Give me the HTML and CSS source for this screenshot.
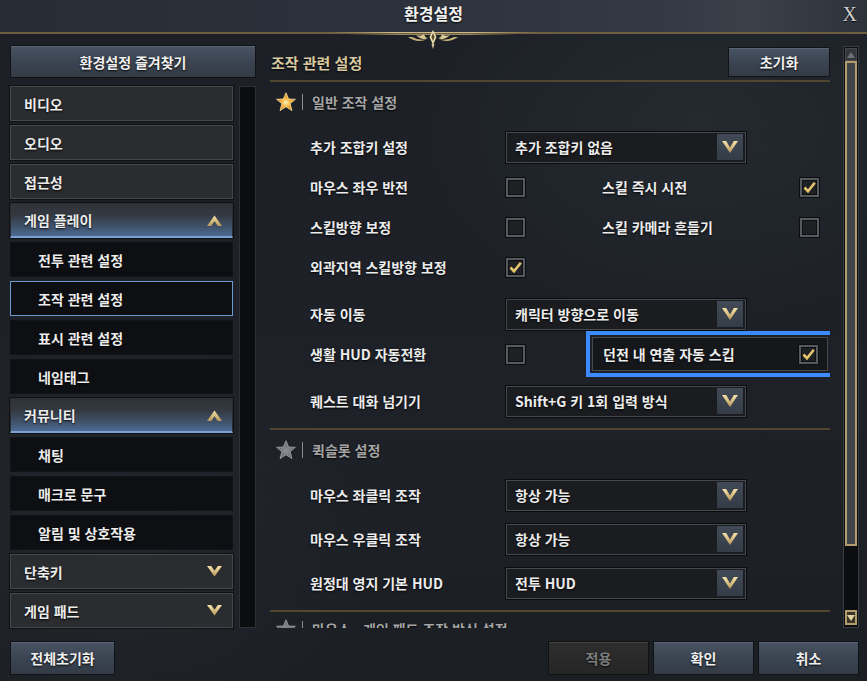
FILE: index.html
```html
<!DOCTYPE html>
<html lang="ko">
<head>
<meta charset="utf-8">
<title>환경설정</title>
<link rel="stylesheet" href="styles.css">
</head>
<body>
<div class="window">
  <header class="titlebar">
    <h1 class="title">환경설정</h1>
    <span class="close">X</span>
    <svg class="ornament" width="210" height="20" viewBox="0 0 210 20">
      <defs>
        <linearGradient id="ornLine" x1="0" x2="1" y1="0" y2="0">
          <stop offset="0" stop-color="#c9b27a" stop-opacity="0"/>
          <stop offset="0.3" stop-color="#d8c38e" stop-opacity="0.9"/>
          <stop offset="0.7" stop-color="#d8c38e" stop-opacity="0.9"/>
          <stop offset="1" stop-color="#c9b27a" stop-opacity="0"/>
        </linearGradient>
      </defs>
      <rect x="0" y="3" width="210" height="1" fill="url(#ornLine)"/>
      <rect x="20" y="5" width="170" height="1" fill="url(#ornLine)" opacity="0.7"/>
      <path d="M105 1 L108.5 8 L105 16 L101.5 8 Z" fill="#eadbae"/>
      <path d="M105 4 L106.6 8 L105 12 L103.4 8 Z" fill="#5b4b2c"/>
      <path d="M100 9 Q94 12 88 6 Q93 8 96 5 Q97 9 100 9 Z" fill="#dcc893"/>
      <path d="M110 9 Q116 12 122 6 Q117 8 114 5 Q113 9 110 9 Z" fill="#dcc893"/>
      <path d="M99 10 Q90 15 80 8 L84 8 Q91 12 99 10 Z" fill="#c9b27a"/>
      <path d="M111 10 Q120 15 130 8 L126 8 Q119 12 111 10 Z" fill="#c9b27a"/>
      <path d="M103.5 15 L105 20 L106.5 15 Z" fill="#dcc893"/>
    </svg>
  </header>

  <div class="main">
    <aside class="sidebar">
      <button class="btn fav">환경설정 즐겨찾기</button>
      <div class="menu-wrap">
        <ul class="menu">
          <li class="item">비디오</li>
          <li class="item">오디오</li>
          <li class="item">접근성</li>
          <li class="item group">게임 플레이
            <svg class="chev" width="15" height="11" viewBox="0 0 15 11"><polygon points="0,11 7.5,0.5 15,11 10.8,11 7.5,6.2 4.2,11" fill="url(#gold)"/></svg>
          </li>
          <li class="item sub">전투 관련 설정</li>
          <li class="item sub selected">조작 관련 설정</li>
          <li class="item sub">표시 관련 설정</li>
          <li class="item sub">네임태그</li>
          <li class="item group">커뮤니티
            <svg class="chev" width="15" height="11" viewBox="0 0 15 11"><polygon points="0,11 7.5,0.5 15,11 10.8,11 7.5,6.2 4.2,11" fill="url(#gold)"/></svg>
          </li>
          <li class="item sub">채팅</li>
          <li class="item sub">매크로 문구</li>
          <li class="item sub">알림 및 상호작용</li>
          <li class="item">단축키
            <svg class="chev" width="15" height="11" viewBox="0 0 15 11"><polygon points="0,0 7.5,10.5 15,0 10.8,0 7.5,4.8 4.2,0" fill="url(#gold)"/></svg>
          </li>
          <li class="item">게임 패드
            <svg class="chev" width="15" height="11" viewBox="0 0 15 11"><polygon points="0,0 7.5,10.5 15,0 10.8,0 7.5,4.8 4.2,0" fill="url(#gold)"/></svg>
          </li>
        </ul>
        <div class="side-track"></div>
      </div>
    </aside>

    <section class="panel">
      <div class="panel-body">
        <div class="panel-head">
          <h2 class="panel-title">조작 관련 설정</h2>
          <button class="btn reset">초기화</button>
        </div>
        <div class="scroll">
          <div class="section">
            <div class="sec-head">
              <svg class="star" width="20" height="20" viewBox="0 0 20 20"><polygon points="10,0.8 12.6,7 19.4,7.3 14.1,11.6 15.9,18.6 10,14.7 4.1,18.6 5.9,11.6 0.6,7.3 7.4,7" fill="url(#starGold)" stroke="#ffe7a0" stroke-width="0.8"/></svg>
              <span class="sep"></span>
              <span class="sec-title">일반 조작 설정</span>
            </div>
            <div class="rows">
              <div class="row">
                <span class="label">추가 조합키 설정</span>
                <div class="dropdown"><span>추가 조합키 없음</span><span class="dd-btn"><svg width="16" height="12" viewBox="0 0 16 12"><polygon points="0,0 4.2,0 8,6.5 11.8,0 16,0 8,12" fill="url(#gold)"/></svg></span></div>
              </div>
              <div class="row cbrow">
                <span class="label">마우스 좌우 반전</span>
                <span class="cb"></span>
                <div class="col2"><span class="label2">스킬 즉시 시전</span><span class="cb on"><svg width="15" height="15" viewBox="0 0 15 15"><path d="M2.5 7.5 L6 11.2 L12.8 2.8" fill="none" stroke="#e7c56e" stroke-width="2.6"/></svg></span></div>
              </div>
              <div class="row cbrow">
                <span class="label">스킬방향 보정</span>
                <span class="cb"></span>
                <div class="col2"><span class="label2">스킬 카메라 흔들기</span><span class="cb"></span></div>
              </div>
              <div class="row cbrow">
                <span class="label">외곽지역 스킬방향 보정</span>
                <span class="cb on"><svg width="15" height="15" viewBox="0 0 15 15"><path d="M2.5 7.5 L6 11.2 L12.8 2.8" fill="none" stroke="#e7c56e" stroke-width="2.6"/></svg></span>
              </div>
              <div class="row wide">
                <span class="label">자동 이동</span>
                <div class="dropdown"><span>캐릭터 방향으로 이동</span><span class="dd-btn"><svg width="16" height="12" viewBox="0 0 16 12"><polygon points="0,0 4.2,0 8,6.5 11.8,0 16,0 8,12" fill="url(#gold)"/></svg></span></div>
              </div>
              <div class="row cbrow">
                <span class="label">생활 HUD 자동전환</span>
                <span class="cb"></span>
                <div class="col2 boxed"><span class="label2">던전 내 연출 자동 스킵</span><span class="cb on"><svg width="15" height="15" viewBox="0 0 15 15"><path d="M2.5 7.5 L6 11.2 L12.8 2.8" fill="none" stroke="#e7c56e" stroke-width="2.6"/></svg></span></div>
              </div>
              <div class="row wide">
                <span class="label">퀘스트 대화 넘기기</span>
                <div class="dropdown"><span>Shift+G 키 1회 입력 방식</span><span class="dd-btn"><svg width="16" height="12" viewBox="0 0 16 12"><polygon points="0,0 4.2,0 8,6.5 11.8,0 16,0 8,12" fill="url(#gold)"/></svg></span></div>
              </div>
            </div>
          </div>

          <div class="section sec2">
            <div class="sec-head">
              <svg class="star" width="20" height="20" viewBox="0 0 20 20"><polygon points="10,0.8 12.6,7 19.4,7.3 14.1,11.6 15.9,18.6 10,14.7 4.1,18.6 5.9,11.6 0.6,7.3 7.4,7" fill="url(#starGrey)" stroke="#a6a9ae" stroke-width="0.8"/></svg>
              <span class="sep"></span>
              <span class="sec-title">퀵슬롯 설정</span>
            </div>
            <div class="rows">
              <div class="row">
                <span class="label">마우스 좌클릭 조작</span>
                <div class="dropdown"><span>항상 가능</span><span class="dd-btn"><svg width="16" height="12" viewBox="0 0 16 12"><polygon points="0,0 4.2,0 8,6.5 11.8,0 16,0 8,12" fill="url(#gold)"/></svg></span></div>
              </div>
              <div class="row">
                <span class="label">마우스 우클릭 조작</span>
                <div class="dropdown"><span>항상 가능</span><span class="dd-btn"><svg width="16" height="12" viewBox="0 0 16 12"><polygon points="0,0 4.2,0 8,6.5 11.8,0 16,0 8,12" fill="url(#gold)"/></svg></span></div>
              </div>
              <div class="row">
                <span class="label">원정대 영지 기본 HUD</span>
                <div class="dropdown"><span>전투 HUD</span><span class="dd-btn"><svg width="16" height="12" viewBox="0 0 16 12"><polygon points="0,0 4.2,0 8,6.5 11.8,0 16,0 8,12" fill="url(#gold)"/></svg></span></div>
              </div>
            </div>
          </div>

          <div class="section sec3">
            <div class="sec-head">
              <svg class="star" width="20" height="20" viewBox="0 0 20 20"><polygon points="10,0.8 12.6,7 19.4,7.3 14.1,11.6 15.9,18.6 10,14.7 4.1,18.6 5.9,11.6 0.6,7.3 7.4,7" fill="url(#starGrey)" stroke="#a6a9ae" stroke-width="0.8"/></svg>
              <span class="sep"></span>
              <span class="sec-title">마우스 · 게임 패드 조작 방식 설정</span>
            </div>
          </div>
        </div>
      </div>
      <div class="vscroll">
        <span class="vs-up"><svg width="8" height="6" viewBox="0 0 8 6"><polygon points="0,6 4,0 8,6" fill="#6c6f74"/></svg></span>
        <span class="vs-thumb"></span>
        <span class="vs-space"></span>
        <span class="vs-down"><svg width="8" height="6" viewBox="0 0 8 6"><polygon points="0,0 8,0 4,6" fill="#e2d2a6"/></svg></span>
      </div>
    </section>
  </div>

  <footer class="footer">
    <button class="btn wide-btn">전체초기화</button>
    <div class="actions">
      <button class="btn act disabled">적용</button>
      <button class="btn act">확인</button>
      <button class="btn act">취소</button>
    </div>
  </footer>

  <svg class="defs" width="0" height="0">
    <defs>
      <linearGradient id="gold" x1="0" x2="0" y1="0" y2="1">
        <stop offset="0" stop-color="#f6e3a8"/>
        <stop offset="1" stop-color="#b9985a"/>
      </linearGradient>
      <radialGradient id="starGold" cx="0.5" cy="0.55" r="0.55">
        <stop offset="0" stop-color="#fff3b8"/>
        <stop offset="0.45" stop-color="#f5b13c"/>
        <stop offset="1" stop-color="#c8741a"/>
      </radialGradient>
      <radialGradient id="starGrey" cx="0.5" cy="0.55" r="0.55">
        <stop offset="0" stop-color="#8e9196"/>
        <stop offset="1" stop-color="#5d6065"/>
      </radialGradient>
    </defs>
  </svg>
</div>
</body>
</html>
```

FILE: styles.css
```css
* {
  box-sizing: border-box;
  margin: 0;
  padding: 0;
}

html, body {
  width: 867px;
  height: 681px;
  overflow: hidden;
}

body {
  font-family: "Noto Sans CJK KR", "Noto Sans", sans-serif;
  font-size: 14px;
  color: #e8e8e8;
  background: #1d2127;
}

.window {
  position: relative;
  width: 867px;
  height: 681px;
  display: flex;
  flex-direction: column;
  background:
    radial-gradient(ellipse 300px 200px at 700px 120px, rgba(60, 66, 76, 0.25), transparent),
    radial-gradient(ellipse 260px 220px at 120px 560px, rgba(50, 56, 64, 0.25), transparent),
    linear-gradient(180deg, #1c2026 0%, #1e2228 60%, #1b1e23 100%);
}

.defs {
  position: absolute;
  width: 0;
  height: 0;
}

/* ---------- title bar ---------- */
.titlebar {
  position: relative;
  flex: none;
  height: 34px;
  display: flex;
  align-items: center;
  justify-content: center;
  padding-bottom: 6px;
  background: linear-gradient(90deg, #272c35 0%, #2c313b 45%, #343944 78%, #3b4049 86%, #2d323b 100%);
  border-bottom: 2px solid #6f5f3e;
}

.title {
  font-size: 16px;
  font-weight: 700;
  color: #f2f2f2;
  text-shadow: 0 1px 2px rgba(0, 0, 0, 0.9);
}

.close {
  position: absolute;
  right: 10px;
  top: 3px;
  font-family: "Liberation Serif", "DejaVu Serif", serif;
  font-size: 20px;
  color: #cfcfcf;
  text-shadow: 0 1px 1px rgba(0, 0, 0, 0.8);
}

.ornament {
  position: absolute;
  left: 328px;
  top: 29px;
}

/* ---------- main ---------- */
.main {
  flex: none;
  height: 594px;
  display: flex;
  padding: 11px 8px 0 10px;
}

.btn {
  font-family: "Noto Sans CJK KR", "Noto Sans", sans-serif;
  font-size: 14px;
  font-weight: 700;
  color: #f0f0f0;
  background: linear-gradient(180deg, #485363 0%, #3a4350 55%, #333b46 100%);
  border: 1px solid #111316;
  box-shadow: inset 0 1px 0 rgba(255, 255, 255, 0.1);
  text-shadow: 0 1px 2px rgba(0, 0, 0, 0.9);
}

/* ---------- sidebar ---------- */
.sidebar {
  width: 246px;
  flex: none;
  display: flex;
  flex-direction: column;
}

.fav {
  height: 33px;
  width: 246px;
  margin-bottom: 8px;
}

.menu-wrap {
  display: flex;
  height: 542px;
}

.menu {
  list-style: none;
  width: 223px;
  display: flex;
  flex-direction: column;
  gap: 4px;
}

.item {
  height: 35px;
  display: flex;
  align-items: center;
  justify-content: space-between;
  padding: 0 10px 0 13px;
  font-weight: 700;
  font-size: 14px;
  color: #ececec;
  background: #2b2c2f;
  border: 1px solid #46484c;
  box-shadow: 0 0 0 1px #101113;
  text-shadow: 0 1px 2px rgba(0, 0, 0, 0.9);
}

.item.group {
  background: linear-gradient(180deg, #303338 0%, #343941 35%, #41556f 75%, #4d6b93 100%);
  border: 1px solid #2a2d31;
  border-bottom: 2px solid #7aa1d2;
}

.item.sub {
  padding-left: 27px;
  background: #0d0f12;
  border: 1px solid #121418;
  box-shadow: none;
}

.item.sub.selected {
  border: 1px solid #6a9bcd;
}

.chev {
  flex: none;
}

.side-track {
  width: 17px;
  margin-left: 6px;
  height: 542px;
  background: #0b0d0f;
  border: 1px solid #2d3034;
}

/* ---------- panel ---------- */
.panel {
  display: flex;
  margin-left: 14px;
  padding-top: 1px;
}

.panel-body {
  width: 560px;
  padding-top: 1px;
  display: flex;
  flex-direction: column;
}

.panel-head {
  height: 30px;
  display: flex;
  align-items: center;
  justify-content: space-between;
  margin-bottom: 3px;
}

.panel-title {
  font-size: 15px;
  font-weight: 700;
  color: #d9c9a0;
  padding-left: 1px;
  text-shadow: 0 1px 2px rgba(0, 0, 0, 0.9);
}

.reset {
  width: 102px;
  height: 30px;
}

.scroll {
  height: 548px;
  overflow: hidden;
}

.section {
  border-top: 2px solid #51472f;
  padding: 10px 0;
}

.sec3 {
  padding-top: 7px;
}

.sec-head {
  height: 20px;
  display: flex;
  align-items: center;
  padding-left: 6px;
}

.star {
  flex: none;
}

.sep {
  width: 1px;
  height: 16px;
  background: #8c8c8c;
  margin: 0 9px 0 6px;
}

.sec-title {
  font-size: 14px;
  font-weight: 700;
  color: #a5a5a5;
  text-shadow: 0 1px 2px rgba(0, 0, 0, 0.9);
}

.rows {
  margin-top: 18px;
  padding-left: 40px;
  display: flex;
  flex-direction: column;
  gap: 6px;
}

.sec2 .rows {
  gap: 10px;
}

.row {
  height: 34px;
  display: flex;
  align-items: center;
}

.row.wide {
  margin-top: 7px;
}

.label {
  width: 196px;
  flex: none;
  font-weight: 700;
  color: #ececec;
  text-shadow: 0 1px 2px rgba(0, 0, 0, 0.9);
}

.label2 {
  font-weight: 700;
  color: #ececec;
  text-shadow: 0 1px 2px rgba(0, 0, 0, 0.9);
}

.dropdown {
  width: 240px;
  height: 31px;
  display: flex;
  align-items: center;
  padding-left: 8px;
  background: #1a1c1f;
  border: 1px solid #46494e;
  box-shadow: 0 0 0 1px #0a0b0d;
  font-weight: 700;
  color: #ececec;
  text-shadow: 0 1px 2px rgba(0, 0, 0, 0.9);
}

.dd-btn {
  margin-left: auto;
  margin-right: 2px;
  width: 26px;
  height: 26px;
  display: flex;
  align-items: center;
  justify-content: center;
  background: linear-gradient(180deg, #414a56 0%, #343c47 100%);
}

.cb {
  flex: none;
  width: 19px;
  height: 19px;
  display: flex;
  align-items: center;
  justify-content: center;
  background: #1e2024;
  border: 2px solid #56595e;
  box-shadow: 0 0 0 1px #0c0d0f, inset 0 0 0 1px #0f1012;
}

.col2 {
  margin-left: 67px;
  width: 236px;
  height: 34px;
  display: flex;
  align-items: center;
  justify-content: space-between;
  padding: 0 9px 0 10px;
}

.col2.boxed {
  background: #15171a;
  border: 1px solid #45484d;
  outline: 4px solid #3b8bfd;
  outline-offset: 2px;
}

/* ---------- vertical scrollbar ---------- */
.vscroll {
  width: 16px;
  height: 582px;
  margin-left: 13px;
  display: flex;
  flex-direction: column;
  align-items: center;
  padding: 1px;
  background: #0b0d10;
  border: 1px solid #383b40;
}

.vs-up {
  width: 12px;
  height: 13px;
  display: flex;
  align-items: center;
  justify-content: center;
  background: #34373c;
  border: 1px solid #45484d;
}

.vs-thumb {
  width: 12px;
  height: 485px;
  background: #404349;
  border: 2px solid #b49d6d;
}

.vs-space {
  flex: 1;
}

.vs-down {
  width: 12px;
  height: 15px;
  display: flex;
  align-items: center;
  justify-content: center;
  background: #3a3427;
  border: 2px solid #b49d6d;
  margin-bottom: 1px;
}

/* ---------- footer ---------- */
.footer {
  flex: none;
  display: flex;
  justify-content: space-between;
  padding: 13px 8px 0 10px;
}

.wide-btn {
  width: 105px;
  height: 34px;
}

.actions {
  display: flex;
  gap: 4px;
}

.act {
  width: 101px;
  height: 34px;
}

.act.disabled {
  color: #7e7e7e;
  background: linear-gradient(180deg, #2e2e2f 0%, #262627 100%);
  border: 1px solid #121212;
}
```
